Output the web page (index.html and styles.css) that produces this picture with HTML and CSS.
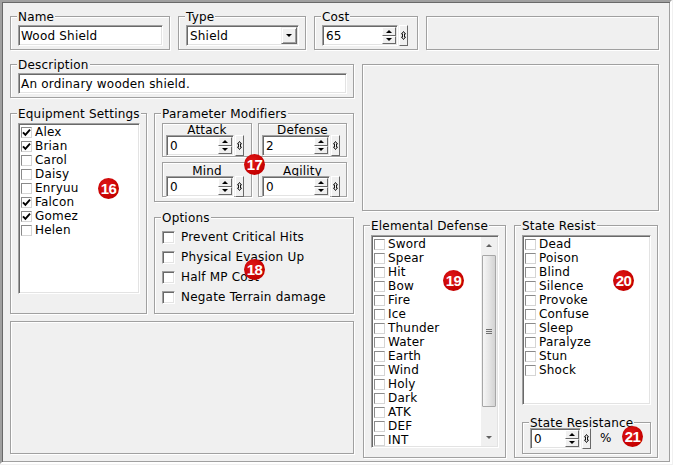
FILE: index.html
```html
<!DOCTYPE html>
<html>
<head>
<meta charset="utf-8">
<title>Equipment Editor</title>
<link rel="stylesheet" href="styles.css">
</head>
<body>
<div class="win">
  <div class="row1">
    <div class="grp g-name">
      <span class="cap">Name</span>
      <div class="edit"><span class="txt">Wood Shield</span></div>
    </div>
    <div class="grp g-type">
      <span class="cap">Type</span>
      <div class="combo"><span class="txt">Shield</span><span class="dd"><i class="tri-dn"></i></span></div>
    </div>
    <div class="grp g-cost">
      <span class="cap">Cost</span>
      <div class="num"><div class="ed w76"><span class="val">65</span><span class="spin"><i class="sbtn"><b class="tri-up"></b></i><i class="sbtn"><b class="tri-dn2"></b></i></span></div><span class="nub"><svg width="5" height="9" viewBox="0 0 5 9"><path d="M2.5 0.5 L4.5 3 L3.5 3 L3.5 6 L4.5 6 L2.5 8.5 L0.5 6 L1.5 6 L1.5 3 L0.5 3 Z" fill="none" stroke="#000" stroke-width="0.9"/></svg></span></div>
    </div>
    <div class="grp g-blank1"></div>
  </div>

  <div class="main">
    <div class="lcol">
      <div class="grp g-desc">
        <span class="cap">Description</span>
        <div class="edit"><span class="txt">An ordinary wooden shield.</span></div>
      </div>

      <div class="mid">
        <div class="grp g-equip">
          <span class="cap">Equipment Settings</span>
          <div class="list l-equip">
            <div class="li"><span class="cb on"><svg width="9" height="9" viewBox="0 0 9 9"><path d="M1 4.3 L3.4 6.8 L8 1.6" fill="none" stroke="#000" stroke-width="1.9"/></svg></span>Alex</div>
            <div class="li"><span class="cb on"><svg width="9" height="9" viewBox="0 0 9 9"><path d="M1 4.3 L3.4 6.8 L8 1.6" fill="none" stroke="#000" stroke-width="1.9"/></svg></span>Brian</div>
            <div class="li"><span class="cb"></span>Carol</div>
            <div class="li"><span class="cb"></span>Daisy</div>
            <div class="li"><span class="cb"></span>Enryuu</div>
            <div class="li"><span class="cb on"><svg width="9" height="9" viewBox="0 0 9 9"><path d="M1 4.3 L3.4 6.8 L8 1.6" fill="none" stroke="#000" stroke-width="1.9"/></svg></span>Falcon</div>
            <div class="li"><span class="cb on"><svg width="9" height="9" viewBox="0 0 9 9"><path d="M1 4.3 L3.4 6.8 L8 1.6" fill="none" stroke="#000" stroke-width="1.9"/></svg></span>Gomez</div>
            <div class="li"><span class="cb"></span>Helen</div>
          </div>
        </div>

        <div class="pcol">
          <div class="grp g-param">
            <span class="cap">Parameter Modifiers</span>
            <div class="pgrid">
              <div class="sub">
                <span class="slbl">Attack</span>
                <div class="num"><div class="ed w68"><span class="val">0</span><span class="spin"><i class="sbtn"><b class="tri-up"></b></i><i class="sbtn"><b class="tri-dn2"></b></i></span></div><span class="nub"><svg width="5" height="9" viewBox="0 0 5 9"><path d="M2.5 0.5 L4.5 3 L3.5 3 L3.5 6 L4.5 6 L2.5 8.5 L0.5 6 L1.5 6 L1.5 3 L0.5 3 Z" fill="none" stroke="#000" stroke-width="0.9"/></svg></span></div>
              </div>
              <div class="sub">
                <span class="slbl">Defense</span>
                <div class="num"><div class="ed w68"><span class="val">2</span><span class="spin"><i class="sbtn"><b class="tri-up"></b></i><i class="sbtn"><b class="tri-dn2"></b></i></span></div><span class="nub"><svg width="5" height="9" viewBox="0 0 5 9"><path d="M2.5 0.5 L4.5 3 L3.5 3 L3.5 6 L4.5 6 L2.5 8.5 L0.5 6 L1.5 6 L1.5 3 L0.5 3 Z" fill="none" stroke="#000" stroke-width="0.9"/></svg></span></div>
              </div>
              <div class="sub lo">
                <span class="slbl">Mind</span>
                <div class="num"><div class="ed w68"><span class="val">0</span><span class="spin"><i class="sbtn"><b class="tri-up"></b></i><i class="sbtn"><b class="tri-dn2"></b></i></span></div><span class="nub"><svg width="5" height="9" viewBox="0 0 5 9"><path d="M2.5 0.5 L4.5 3 L3.5 3 L3.5 6 L4.5 6 L2.5 8.5 L0.5 6 L1.5 6 L1.5 3 L0.5 3 Z" fill="none" stroke="#000" stroke-width="0.9"/></svg></span></div>
              </div>
              <div class="sub lo">
                <span class="slbl">Agility</span>
                <div class="num"><div class="ed w68"><span class="val">0</span><span class="spin"><i class="sbtn"><b class="tri-up"></b></i><i class="sbtn"><b class="tri-dn2"></b></i></span></div><span class="nub"><svg width="5" height="9" viewBox="0 0 5 9"><path d="M2.5 0.5 L4.5 3 L3.5 3 L3.5 6 L4.5 6 L2.5 8.5 L0.5 6 L1.5 6 L1.5 3 L0.5 3 Z" fill="none" stroke="#000" stroke-width="0.9"/></svg></span></div>
              </div>
            </div>
          </div>

          <div class="grp g-opt">
            <span class="cap">Options</span>
            <div class="opts">
              <div class="opt"><span class="cb13"></span>Prevent Critical Hits</div>
              <div class="opt"><span class="cb13"></span>Physical Evasion Up</div>
              <div class="opt"><span class="cb13"></span>Half MP Cost</div>
              <div class="opt"><span class="cb13"></span>Negate Terrain damage</div>
            </div>
          </div>
        </div>
      </div>

      <div class="grp g-blank3"></div>
    </div>

    <div class="rcol">
      <div class="grp g-blank2"></div>
      <div class="rrow">
        <div class="grp g-elem">
          <span class="cap">Elemental Defense</span>
          <div class="list l-elem">
            <div class="items">
              <div class="li"><span class="cb"></span>Sword</div>
              <div class="li"><span class="cb"></span>Spear</div>
              <div class="li"><span class="cb"></span>Hit</div>
              <div class="li"><span class="cb"></span>Bow</div>
              <div class="li"><span class="cb"></span>Fire</div>
              <div class="li"><span class="cb"></span>Ice</div>
              <div class="li"><span class="cb"></span>Thunder</div>
              <div class="li"><span class="cb"></span>Water</div>
              <div class="li"><span class="cb"></span>Earth</div>
              <div class="li"><span class="cb"></span>Wind</div>
              <div class="li"><span class="cb"></span>Holy</div>
              <div class="li"><span class="cb"></span>Dark</div>
              <div class="li"><span class="cb"></span>ATK</div>
              <div class="li"><span class="cb"></span>DEF</div>
              <div class="li"><span class="cb"></span>INT</div>
            </div>
            <div class="sb">
              <div class="sbb"><b class="stri-up"></b></div>
              <div class="thumb"><i></i><i></i><i></i></div>
              <div class="sbfill"></div>
              <div class="sbb"><b class="stri-dn"></b></div>
            </div>
          </div>
        </div>

        <div class="grp g-state">
          <span class="cap">State Resist</span>
          <div class="list l-state">
            <div class="li"><span class="cb"></span>Dead</div>
            <div class="li"><span class="cb"></span>Poison</div>
            <div class="li"><span class="cb"></span>Blind</div>
            <div class="li"><span class="cb"></span>Silence</div>
            <div class="li"><span class="cb"></span>Provoke</div>
            <div class="li"><span class="cb"></span>Confuse</div>
            <div class="li"><span class="cb"></span>Sleep</div>
            <div class="li"><span class="cb"></span>Paralyze</div>
            <div class="li"><span class="cb"></span>Stun</div>
            <div class="li"><span class="cb"></span>Shock</div>
          </div>
          <div class="grp g-sres">
            <span class="cap">State Resistance</span>
            <div class="sres-row">
              <div class="num"><div class="ed w51"><span class="val">0</span><span class="spin"><i class="sbtn"><b class="tri-up"></b></i><i class="sbtn"><b class="tri-dn2"></b></i></span></div><span class="nub"><svg width="5" height="9" viewBox="0 0 5 9"><path d="M2.5 0.5 L4.5 3 L3.5 3 L3.5 6 L4.5 6 L2.5 8.5 L0.5 6 L1.5 6 L1.5 3 L0.5 3 Z" fill="none" stroke="#000" stroke-width="0.9"/></svg></span></div>
              <span class="pct">%</span>
            </div>
          </div>
        </div>
      </div>
    </div>
  </div>

  <span class="badge b16">16</span>
  <span class="badge b17">17</span>
  <span class="badge b18">18</span>
  <span class="badge b19">19</span>
  <span class="badge b20">20</span>
  <span class="badge b21">21</span>
</div>
</body>
</html>
```

FILE: styles.css
```css
* { box-sizing: border-box; }
html, body { margin: 0; background: #f0f0f0; }
body {
  font-family: "DejaVu Sans", Verdana, sans-serif;
  font-size: 12px;
  line-height: 13px;
  letter-spacing: 0.2px;
  color: #000;
}
i, b { font-style: normal; font-weight: normal; }

.win {
  position: relative;
  width: 672px;
  height: 464px;
  border: 2px solid;
  border-color: #a0a0a0 #fff #fff #a0a0a0;
  box-shadow: inset 1px 1px 0 #696969, inset -1px -1px 0 #a0a0a0;
  padding: 14px 11px 0 8px;
}

/* group boxes (etched frame) */
.grp {
  border: 1px solid #a0a0a0;
  box-shadow: inset 1px 1px 0 #fff, 1px 1px 0 #fff;
  padding: 0 6px 0 7px;
}
.cap {
  display: block;
  width: max-content;
  height: 13px;
  margin: -6px 0 0 -1px;
  padding: 0 1px;
  background: #f0f0f0;
  line-height: 13px;
  white-space: nowrap;
}

.row1 { display: flex; gap: 8px; height: 34px; }
.g-name { width: 160px; }
.g-type { width: 128px; }
.g-cost { width: 104px; }
.g-blank1 { flex: 1; }

.main { display: flex; gap: 8px; margin-top: 14px; }
.lcol { width: 344px; display: flex; flex-direction: column; }
.rcol { flex: 1; display: flex; flex-direction: column; }

.g-desc { height: 34px; }
.mid { display: flex; gap: 7px; margin-top: 15px; height: 201px; }
.g-equip { width: 137px; }
.pcol { flex: 1; display: flex; flex-direction: column; gap: 15px; }
.g-param { height: 89px; }
.g-opt { flex: 1; }
.g-blank3 { margin-top: 7px; height: 133px; }

.g-blank2 { height: 147px; }
.rrow { display: flex; gap: 8px; margin-top: 14px; height: 233px; }
.g-elem { width: 143px; margin-left: 1px; }
.g-state { width: 144px; }

/* sunken controls */
.edit, .combo, .ed, .list, .cb13 {
  border: 1px solid;
  border-color: #a0a0a0 #fff #fff #a0a0a0;
  box-shadow: inset 1px 1px 0 #696969, inset -1px -1px 0 #e3e3e3;
  background: #fff;
}
.edit {
  height: 21px;
  margin-top: 1px;
  padding: 1px 1px 1px 2px;
  line-height: 18px;
  white-space: nowrap;
}
.combo {
  display: flex;
  height: 21px;
  margin-top: 1px;
  padding: 1px;
}
.combo .txt { flex: 1; padding-left: 2px; line-height: 18px; }
.dd {
  width: 16px;
  display: flex;
  align-items: center;
  justify-content: center;
  background: #f0f0f0;
  border: 1px solid;
  border-color: #f0f0f0 #696969 #696969 #f0f0f0;
  box-shadow: inset 1px 1px 0 #fff, inset -1px -1px 0 #a0a0a0;
}
.tri-dn {
  width: 0; height: 0;
  border-left: 3px solid transparent;
  border-right: 3px solid transparent;
  border-top: 3px solid #000;
}

/* numeric spin edits */
.num { display: flex; height: 21px; }
.g-cost .num { margin-top: 1px; }
.ed { display: flex; padding: 1px; }
.w76 { width: 76px; }
.w68 { width: 68px; }
.w51 { width: 51px; }
.val { flex: 1; padding-left: 2px; line-height: 18px; }
.spin { width: 14px; display: flex; flex-direction: column; }
.sbtn {
  flex: 1;
  display: flex;
  align-items: center;
  justify-content: center;
  background: #f0f0f0;
  border: 1px solid;
  border-color: #fff #696969 #696969 #fff;
}
.tri-up {
  width: 0; height: 0;
  border-left: 3px solid transparent;
  border-right: 3px solid transparent;
  border-bottom: 3px solid #000;
}
.tri-dn2 {
  width: 0; height: 0;
  border-left: 3px solid transparent;
  border-right: 3px solid transparent;
  border-top: 3px solid #000;
}
.nub {
  width: 9px;
  margin-left: 1px;
  display: flex;
  align-items: center;
  justify-content: center;
  background: #f0f0f0;
  border: 1px solid;
  border-color: #fff #696969 #696969 #fff;
}

/* list boxes */
.list { padding: 1px; overflow: hidden; }
.l-equip { margin-top: 2px; height: 171px; }
.l-elem { margin-top: 2px; height: 213px; display: flex; }
.l-state { margin-top: 2px; height: 170px; }
.items { flex: 1; overflow: hidden; }
.li {
  display: flex;
  align-items: center;
  gap: 3px;
  height: 14px;
  padding-left: 1px;
  line-height: 14px;
  white-space: nowrap;
}
.cb {
  flex: none;
  width: 11px;
  height: 11px;
  border: 1px solid;
  border-color: #8a8a8a #d5d5d5 #d5d5d5 #8a8a8a;
  background: #fff;
  display: flex;
  align-items: center;
  justify-content: center;
}

/* scrollbar */
.sb {
  width: 16px;
  display: flex;
  flex-direction: column;
  background: #f0f0f0;
}
.sbb {
  height: 17px;
  display: flex;
  align-items: center;
  justify-content: center;
}
.stri-up {
  width: 0; height: 0;
  border-left: 3px solid transparent;
  border-right: 3px solid transparent;
  border-bottom: 3px solid #606060;
}
.stri-dn {
  width: 0; height: 0;
  border-left: 3px solid transparent;
  border-right: 3px solid transparent;
  border-top: 3px solid #606060;
}
.thumb {
  height: 152px;
  margin: 1px 1px 0;
  border: 1px solid #a7a7a7;
  border-radius: 1px;
  background: linear-gradient(to right, #f6f6f6, #e4e4e4 55%, #d3d3d3);
  display: flex;
  flex-direction: column;
  align-items: center;
  justify-content: center;
  gap: 1px;
}
.thumb i { width: 6px; height: 1px; background: #707070; }
.sbfill { flex: 1; }

/* parameter modifiers */
.pgrid {
  margin-top: 2px;
  display: grid;
  grid-template-columns: 90px 89px;
  grid-template-rows: 34px 35px;
  gap: 5px 6px;
}
.sub {
  border: 1px solid #a0a0a0;
  box-shadow: inset 1px 1px 0 #fff, 1px 1px 0 #fff;
  display: flex;
  flex-direction: column;
  padding: 0 0 0 3px;
}
.slbl { text-align: center; line-height: 12px; height: 12px; padding-right: 3px; white-space: nowrap; }
.sub.lo .slbl { height: 14px; line-height: 16px; }
.sub .num { margin-top: -1px; }

/* options */
.opts { margin-top: 2px; }
.opt {
  display: flex;
  align-items: center;
  gap: 6px;
  height: 20px;
  line-height: 20px;
  white-space: nowrap;
}
.cb13 { flex: none; width: 13px; height: 13px; }

/* state resistance */
.g-sres { margin-top: 17px; height: 32px; }
.sres-row { display: flex; align-items: center; margin-top: -2px; }
.pct { margin-left: 9px; }

/* annotation badges */
.badge {
  position: absolute;
  width: 21px;
  height: 21px;
  border-radius: 50%;
  background: radial-gradient(circle at 40% 35%, #e01818, #c40000 70%);
  color: #fff;
  font-family: "Liberation Sans", Arial, sans-serif;
  font-weight: bold;
  font-size: 15px;
  line-height: 21px;
  letter-spacing: -0.5px;
  text-align: center;
}
.b16 { left: 96px; top: 176px; }
.b17 { left: 242px; top: 152px; }
.b18 { left: 242px; top: 257px; }
.b19 { left: 441px; top: 268px; }
.b20 { left: 611px; top: 268px; }
.b21 { left: 620px; top: 424px; }
```
